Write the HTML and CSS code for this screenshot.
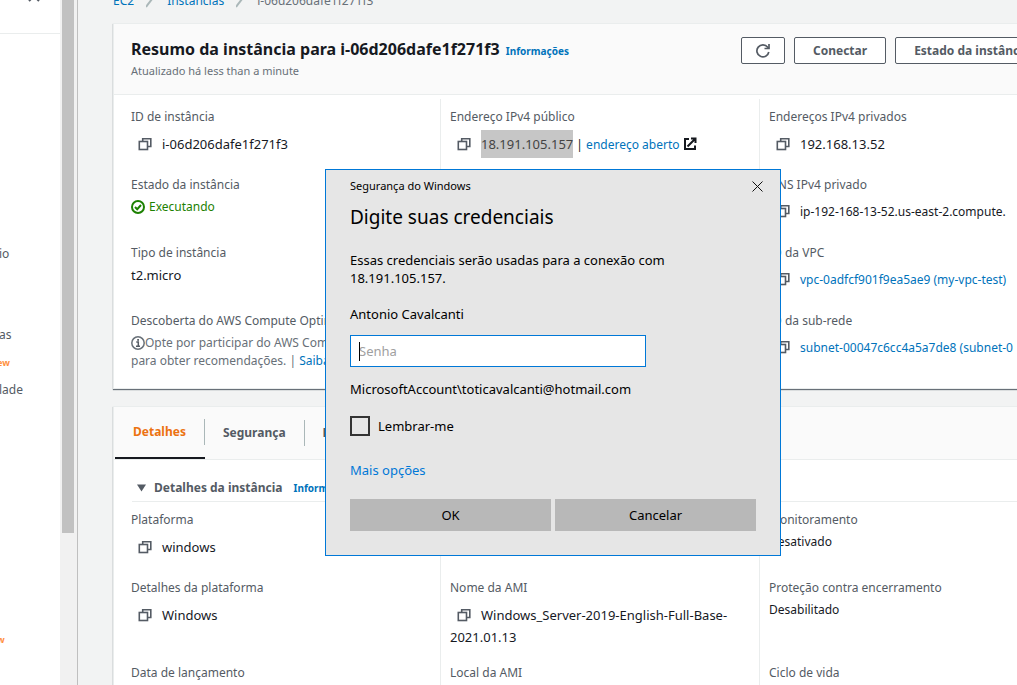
FILE: index.html
```html
<!DOCTYPE html>
<html lang="pt-BR">
<head>
<meta charset="utf-8">
<title>Resumo da instância</title>
<link rel="stylesheet" href="styles.css">
</head>
<body>
<svg class="defs" aria-hidden="true">
  <symbol id="copy" viewBox="0 0 14 14"><path d="M4.700 4.500V1.700H12.800V9.500H10" fill="none" stroke="#545b64" stroke-width="1.600"/><rect x="1.300" y="4.500" width="8.200" height="8" fill="#fff" stroke="#545b64" stroke-width="1.600"/></symbol>
</svg>
<div class="shell">
  <nav class="side" aria-label="Menu">
    <div class="side-top"><svg class="side-close" viewBox="0 0 12 12"><path d="M1 1L11 11M11 1L1 11" stroke="#545b64" stroke-width="2"/></svg></div>
    <ul class="side-list">
      <li class="s-a">io</li>
      <li class="s-b">as</li>
      <li class="s-new">ew</li>
      <li class="s-c">lade</li>
      <li class="s-new s-last">w</li>
    </ul>
  </nav>
  <div class="track"><div class="thumb"></div></div>
  <main class="main">
    <nav class="crumbs" aria-label="Trilha">
      <a href="#">EC2</a><svg class="slash" viewBox="0 0 9 14"><path d="M0 13L9 1" stroke="#aab7b8" stroke-width="2"/></svg><a href="#">Instâncias</a><svg class="slash" viewBox="0 0 9 14"><path d="M0 13L9 1" stroke="#aab7b8" stroke-width="2"/></svg><span>i-06d206dafe1f271f3</span>
    </nav>

    <section class="card">
      <header class="card-head">
        <div class="card-title">
          <h1>Resumo da instância para i-06d206dafe1f271f3 <a href="#" class="info">Informações</a></h1>
          <p>Atualizado há less than a minute</p>
        </div>
        <div class="actions">
          <button class="btn btn-icon" aria-label="Atualizar"><svg viewBox="0 0 16 16" width="16" height="16"><path d="M13.800 9A6 6 0 1 1 12.700 4.300L14 5.500" fill="none" stroke="#545b64" stroke-width="1.700"/><path d="M14 1V5.500H9.500" fill="none" stroke="#545b64" stroke-width="1.700"/></svg></button>
          <button class="btn">Conectar</button>
          <button class="btn">Estado da instância</button>
        </div>
      </header>
      <div class="cols">
        <dl class="col">
          <div class="item"><dt>ID de instância</dt><dd class="copy"><svg class="ci"><use href="#copy"/></svg>i-06d206dafe1f271f3</dd></div>
          <div class="item"><dt>Estado da instância</dt><dd class="ok"><svg class="status" viewBox="0 0 14 14"><circle cx="7" cy="7" r="6" fill="none" stroke="#1d8102" stroke-width="2"/><path d="M4 7L6.200 9.200L10 5" fill="none" stroke="#1d8102" stroke-width="2"/></svg>Executando</dd></div>
          <div class="item"><dt>Tipo de instância</dt><dd>t2.micro</dd></div>
          <div class="item"><dt>Descoberta do AWS Compute Optimizer</dt><dd class="note"><svg class="status" viewBox="0 0 14 14"><circle cx="7" cy="7" r="6.200" fill="none" stroke="#687078" stroke-width="1.500"/><path d="M5.300 6H7.300V10M5 10.200H9" fill="none" stroke="#545b64" stroke-width="1.500"/><rect x="6.200" y="3" width="1.800" height="1.800" fill="#545b64"/></svg>Opte por participar do AWS Compute<br>para obter recomendações. | <a href="#">Saiba mais</a></dd></div>
        </dl>
        <dl class="col">
          <div class="item"><dt>Endereço IPv4 público</dt><dd class="copy"><svg class="ci"><use href="#copy"/></svg><span class="sel">18.191.105.157</span><span class="small"> | <a href="#">endereço aberto <svg class="ext" viewBox="0 0 14 14"><path d="M6 2H2V12H12V8.500M4.500 9.500L12 2M8 1.500H12.500V6" fill="none" stroke="#16191f" stroke-width="2"/></svg></a></span></dd></div>
        </dl>
        <dl class="col">
          <div class="item"><dt>Endereços IPv4 privados</dt><dd class="copy"><svg class="ci"><use href="#copy"/></svg>192.168.13.52</dd></div>
          <div class="item"><dt>DNS IPv4 privado</dt><dd class="copy small"><svg class="ci"><use href="#copy"/></svg>ip-192-168-13-52.us-east-2.compute.</dd></div>
          <div class="item"><dt>ID da VPC</dt><dd class="copy small"><svg class="ci"><use href="#copy"/></svg><a href="#">vpc-0adfcf901f9ea5ae9 (my-vpc-test)</a></dd></div>
          <div class="item"><dt>ID da sub-rede</dt><dd class="copy small"><svg class="ci"><use href="#copy"/></svg><a href="#">subnet-00047c6cc4a5a7de8 (subnet-0</a></dd></div>
        </dl>
      </div>
    </section>

    <section class="card card-b">
      <div class="tabs" role="tablist">
        <button class="tab on" role="tab" aria-selected="true"><span>Detalhes</span></button>
        <button class="tab" role="tab"><span>Segurança</span></button>
        <button class="tab" role="tab"><span>Redes</span></button>
      </div>
      <h2 class="sub"><svg class="tri" viewBox="0 0 10 8"><path d="M0 0H10L5 8Z" fill="#545b64"/></svg>Detalhes da instância <a href="#" class="info">Informações</a></h2>
      <div class="cols cols-b">
        <dl class="col">
          <div class="item"><dt>Plataforma</dt><dd class="copy"><svg class="ci"><use href="#copy"/></svg>windows</dd></div>
          <div class="item tall"><dt>Detalhes da plataforma</dt><dd class="copy"><svg class="ci"><use href="#copy"/></svg>Windows</dd></div>
          <div class="item"><dt>Data de lançamento</dt></div>
        </dl>
        <dl class="col">
          <div class="item"></div>
          <div class="item tall"><dt>Nome da AMI</dt><dd class="copy wrap"><svg class="ci"><use href="#copy"/></svg>Windows_Server-2019-English-Full-Base-<wbr>2021.01.13</dd></div>
          <div class="item"><dt>Local da AMI</dt></div>
        </dl>
        <dl class="col">
          <div class="item"><dt>Monitoramento</dt><dd class="small">Desativado</dd></div>
          <div class="item tall"><dt>Proteção contra encerramento</dt><dd class="small">Desabilitado</dd></div>
          <div class="item"><dt>Ciclo de vida</dt></div>
        </dl>
      </div>
    </section>
  </main>
</div>

<form class="dialog" role="dialog" aria-labelledby="dlg-title">
  <div class="dlg-bar"><span>Segurança do Windows</span><button type="button" class="dlg-x" aria-label="Fechar"><svg viewBox="0 0 11 11" width="11" height="11"><path d="M.5 .5L10.500 10.500M10.500 .5L.5 10.500" stroke="#111" stroke-width="1"/></svg></button></div>
  <h2 id="dlg-title">Digite suas credenciais</h2>
  <p class="dlg-text">Essas credenciais serão usadas para a conexão com 18.191.105.157.</p>
  <label class="user" for="pw">Antonio Cavalcanti</label>
  <div class="field"><input id="pw" type="password" placeholder="Senha"><span class="caret"></span></div>
  <p class="account">MicrosoftAccount\toticavalcanti@hotmail.com</p>
  <label class="remember"><input type="checkbox"> Lembrar-me</label>
  <a href="#" class="more">Mais opções</a>
  <div class="dlg-btns"><button type="button">OK</button><button type="button">Cancelar</button></div>
</form>
</body>
</html>
```
FILE: styles.css
```css
* { box-sizing: border-box; }
body {
  margin: 0;
  font: 13px/22px "Noto Sans", "Open Sans", sans-serif;
  color: #16191f;
  background: #f2f3f3;
}
h1, h2, p, dl, dd, ul { margin: 0; padding: 0; }
a { color: #0073bb; text-decoration: none; }
button, input { font: inherit; }
.defs { display: none; }
.small { font-size: 12px; }

.shell { display: flex; height: 100vh; overflow: hidden; }
.side { width: 60px; flex: none; background: #fff; overflow: hidden; }
.side-top { display: flow-root; height: 34px; border-bottom: 1px solid #eaeded; padding-left: 28px; }
.side-close { display: block; width: 12px; height: 12px; margin-top: -10px; }
.side-list { display: flow-root; list-style: none; color: #545b64; font-size: 12px; text-indent: -1px; }
.s-a { margin-top: 209px; }
.s-b { margin-top: 59px; }
.s-c { margin-top: 5px; }
.s-new { color: #ff9040; font-size: 9px; font-weight: 700; text-indent: -3px; margin-top: 6px; }
.s-last { margin-top: 228px; }
.track {
  width: 18px; flex: none; padding: 0 3px 0 2px;
  background: #f1f1f1; border-right: 1px solid #bfbfbf;
}
.thumb { height: 533px; background: #c1c1c1; }

.main { flex: 1; min-width: 0; padding-left: 35px; overflow: hidden; background: #f2f3f3; }
.crumbs {
  display: flex; align-items: center; gap: 12px;
  height: 23px; padding-bottom: 22px; color: #687078; font-size: 12px;
}
.slash { width: 9px; height: 14px; flex: none; }

.card {
  margin: 0 -70px 17px 0;
  background: #fff;
  border: 1px solid #eaeded;
  box-shadow: 0 1px 1px #687078;
}
.card-head {
  display: flex; height: 71px; padding: 13px 0 0 17px;
  background: #fafafa; border-bottom: 1px solid #eaeded;
}
.card-title { width: 610px; flex: none; white-space: nowrap; }
.card-title h1 { font-size: 16px; line-height: 24px; }
.card-title p { font-size: 11px; line-height: 16px; color: #687078; }
.info { font-size: 10px; font-weight: 700; margin-left: 2px; }
.actions { display: flex; gap: 9px; }
.btn {
  height: 27px; padding: 0 18px; white-space: nowrap;
  background: #fff; border: 1px solid #545b64; border-radius: 2px;
  color: #545b64; font-size: 12px; font-weight: 700; line-height: 20px;
}
.btn-icon { padding: 0 13px; }
.btn svg { display: block; }

.cols { display: grid; grid-template-columns: repeat(3, 1fr); padding: 4px 8px 0 7px; }
.col { padding: 7px 9px 10px 10px; min-width: 0; }
.col + .col { border-left: 1px solid #eaeded; padding-left: 9px; }
.item { min-height: 68px; white-space: nowrap; }
.tall { min-height: 85px; }
dt { color: #545b64; font-size: 12px; }
.copy { padding: 5px 0; }
.wrap { white-space: normal; padding-bottom: 0; }
.ci { width: 14px; height: 14px; margin: 0 10px 0 7px; vertical-align: -2px; }
.status { width: 14px; height: 14px; margin-right: 4px; vertical-align: -3px; }
.ok { color: #1d8102; font-size: 12px; }
.note { color: #687078; font-size: 12px; line-height: 18px; padding-top: 2px; }
.note .status { margin-right: 0; }
.sel { background: #c6c6c6; color: #444; padding: 5px 0; }
.ext { width: 14px; height: 14px; vertical-align: -2px; }

.tabs { display: flex; height: 53px; padding-left: 1px; background: #fafafa; border-bottom: 1px solid #eaeded; }
.tab { display: flex; align-items: center; padding: 0; border: 0; background: none; color: #545b64; font-size: 12px; font-weight: 700; }
.tab span { padding: 2px 18px; border-right: 1px solid #aab7b8; }
.tab.on { color: #ec7211; border-bottom: 2px solid #16191f; }
.sub { display: flex; align-items: center; margin-left: 18px; padding: 17px 0 2px 5px; font-size: 12px; line-height: 22px; color: #545b64; border-bottom: 1px solid #eaeded; }
.sub .info { margin-left: 11px; }
.tri { width: 9px; height: 8px; margin-right: 8px; }
.cols-b { padding-top: 0; }

.dialog {
  position: absolute; left: 325px; top: 169px; width: 456px;
  padding: 5px 24px 24px;
  background: #e6e6e6; border: 1px solid #0078d7; color: #000;
  line-height: 18px;
}
.dlg-bar { display: flex; justify-content: space-between; align-items: center; height: 22px; margin-right: -7px; font-size: 11px; }
.dlg-x { width: 11px; height: 11px; padding: 0; border: 0; background: none; }
.dlg-x svg { display: block; }
.dialog h2 { font-size: 19px; font-weight: 400; line-height: 28px; margin: 6px 0 20px; }
.dlg-text { width: 340px; }
.user { display: block; margin: 18px 0 12px; }
.field { position: relative; width: 296px; height: 32px; }
.field input { width: 100%; height: 100%; padding: 0 8px; border: 1px solid #0078d7; border-radius: 0; background: #fff; outline: 0; }
.field input::placeholder { color: #a0a0a0; }
.caret { position: absolute; left: 9px; top: 7px; width: 1px; height: 19px; background: #000; }
.account { margin: 13px 0 18px; }
.remember { display: flex; align-items: center; gap: 8px; height: 20px; }
.remember input { appearance: none; width: 20px; height: 20px; margin: 0; border: 2px solid #333; }
.more { display: block; margin: 25px 0 20px; color: #0078d7; }
.dlg-btns { display: grid; grid-template-columns: 1fr 1fr; gap: 4px; }
.dlg-btns button { height: 32px; padding: 0; border: 0; background: #b8b8b8; color: #000; }
```
